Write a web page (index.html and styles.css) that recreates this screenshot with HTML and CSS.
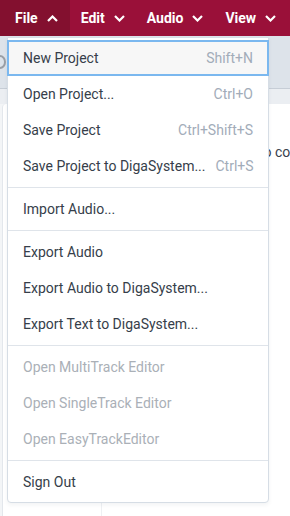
FILE: index.html
```html
<!DOCTYPE html>
<html>
<head>
<meta charset="utf-8">
<link rel="stylesheet" href="styles.css">
</head>
<body>
<div class="app">
  <header class="menubar">
    <div class="tab active">File
      <svg class="chev" width="11" height="7" viewBox="0 0 11 7"><path d="M1 6 L5.5 1.5 L10 6" fill="none" stroke="#fff" stroke-width="2.2"/></svg>
    </div>
    <div class="tab">Edit
      <svg class="chev" width="11" height="7" viewBox="0 0 11 7"><path d="M1 1 L5.5 5.5 L10 1" fill="none" stroke="#fff" stroke-width="2.2"/></svg>
    </div>
    <div class="tab">Audio
      <svg class="chev" width="11" height="7" viewBox="0 0 11 7"><path d="M1 1 L5.5 5.5 L10 1" fill="none" stroke="#fff" stroke-width="2.2"/></svg>
    </div>
    <div class="tab">View
      <svg class="chev" width="11" height="7" viewBox="0 0 11 7"><path d="M1 1 L5.5 5.5 L10 1" fill="none" stroke="#fff" stroke-width="2.2"/></svg>
    </div>
  </header>
  <div class="toolbar">
    <span class="tool-icon"></span>
  </div>
  <div class="strip"></div>
  <div class="content">
    <div class="panel">
      <p class="hint">to co</p>
    </div>
    <div class="footer-row">
      <div class="col"></div>
      <div class="col"></div>
    </div>
  </div>

  <div class="menu">
    <div class="item focused"><span>New Project</span><span class="kbd">Shift+N</span></div>
    <div class="item"><span>Open Project...</span><span class="kbd">Ctrl+O</span></div>
    <div class="item"><span>Save Project</span><span class="kbd">Ctrl+Shift+S</span></div>
    <div class="item"><span>Save Project to DigaSystem...</span><span class="kbd">Ctrl+S</span></div>
    <div class="sep"></div>
    <div class="item"><span>Import Audio...</span></div>
    <div class="sep"></div>
    <div class="item"><span>Export Audio</span></div>
    <div class="item"><span>Export Audio to DigaSystem...</span></div>
    <div class="item"><span>Export Text to DigaSystem...</span></div>
    <div class="sep"></div>
    <div class="item disabled"><span>Open MultiTrack Editor</span></div>
    <div class="item disabled"><span>Open SingleTrack Editor</span></div>
    <div class="item disabled"><span>Open EasyTrackEditor</span></div>
    <div class="sep"></div>
    <div class="item"><span>Sign Out</span></div>
  </div>
</div>
</body>
</html>
```

FILE: styles.css
```css
* { box-sizing: border-box; }
html, body { margin: 0; padding: 0; }
body {
  font-family: Roboto, "Liberation Sans", sans-serif;
  font-size: 14px;
  background: #fff;
  width: 290px;
  height: 516px;
  overflow: hidden;
}
.app {
  position: relative;
  height: 516px;
  display: flex;
  flex-direction: column;
}
.menubar {
  height: 36px;
  background: #9a1039;
  display: flex;
  align-items: stretch;
  flex-shrink: 0;
}
.tab {
  display: flex;
  align-items: center;
  gap: 9px;
  padding: 0 11px 0 11px;
  color: #fff;
  font-weight: 700;
  font-size: 14px;
}
.tab.active {
  background: #83102f;
  padding: 0 12px 0 15px;
}
.chev { display: block; }
.toolbar {
  height: 53px;
  background: #dde3ea;
  border-bottom: 1px solid #c6cdd6;
  position: relative;
  flex-shrink: 0;
}
.tool-icon {
  position: absolute;
  left: -6px;
  top: 19px;
  width: 12px;
  height: 14px;
  border: 2px solid #9a9fa6;
  border-radius: 50%;
}
.strip {
  height: 15px;
  background: #ebeef2;
  flex-shrink: 0;
}
.content {
  flex: 1;
  display: flex;
  flex-direction: column;
  padding-left: 2px;
  background: #f3f5f7;
}
.panel {
  flex: 1;
  background: #fff;
  border-left: 1px solid #e3e7ec;
  border-top-left-radius: 4px;
  padding-top: 38px;
}
.hint {
  margin: 0;
  padding-left: 256px;
  white-space: nowrap;
  color: #39414d;
  font-size: 14px;
  line-height: 20px;
}
.footer-row {
  height: 14px;
  display: flex;
  background: #fff;
  border-left: 1px solid #e3e7ec;
}
.footer-row .col:first-child {
  width: 99px;
  border-right: 1px solid #eef0f3;
}
.menu {
  position: absolute;
  left: 7px;
  top: 37px;
  width: 262px;
  background: #fff;
  border: 1px solid #d6dde5;
  border-radius: 0 0 4px 4px;
  padding: 2px 0;
  box-shadow: 0 2px 4px rgba(40, 50, 70, 0.06);
}
.item {
  height: 36px;
  display: flex;
  align-items: center;
  justify-content: space-between;
  padding: 0 15px;
  color: #363e4a;
  white-space: nowrap;
}
.item .kbd {
  color: #a2acb9;
  margin-left: 10px;
}
.item.focused {
  background: #f7f7f7;
  border: 2px solid #7bb8ef;
  margin: 0 -1px;
  padding: 0 14px;
}
.item.disabled { color: #aab0b7; }
.sep {
  height: 1px;
  background: #dfe4ea;
  margin: 3px 0;
}
```
